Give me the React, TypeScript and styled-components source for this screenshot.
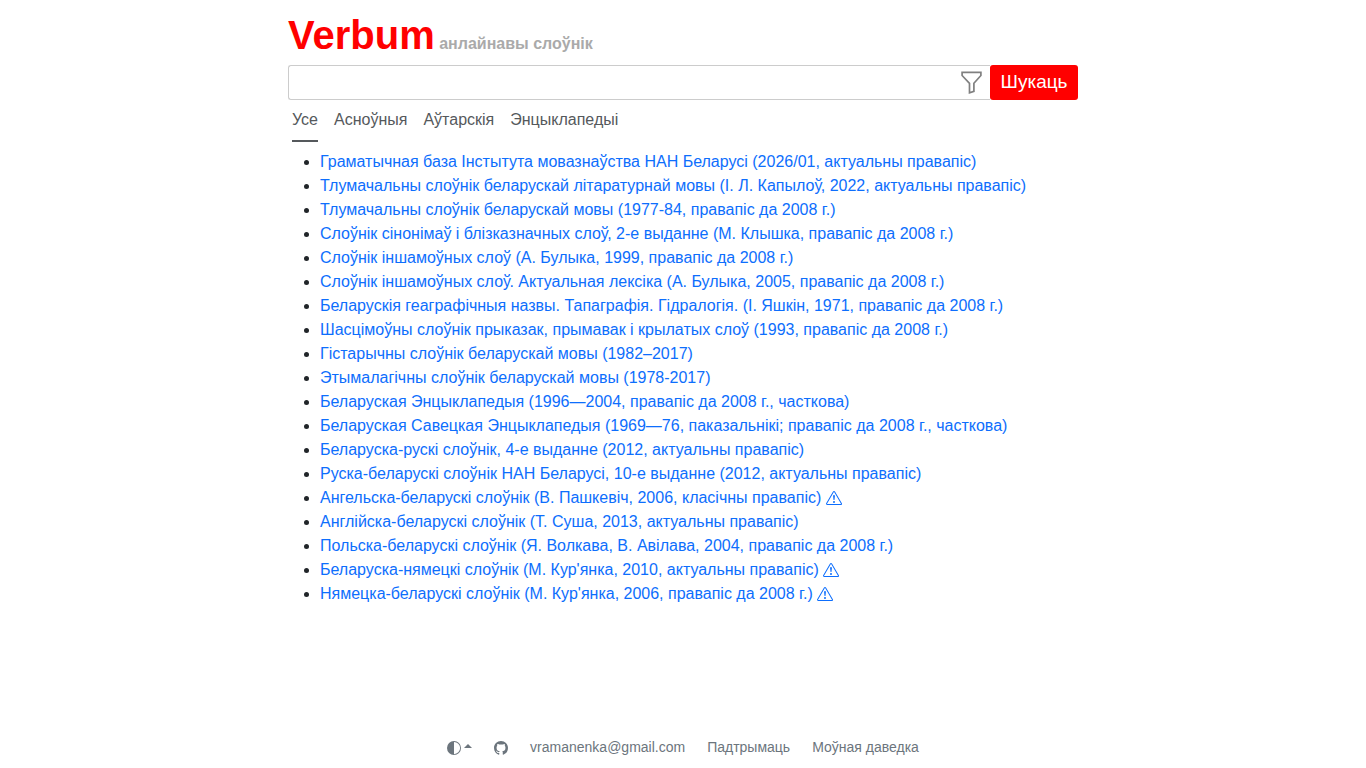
import React, { useState } from "react";
import styled, { createGlobalStyle } from "styled-components";
import { BsExclamationTriangle, BsGithub, BsCircleHalf } from "react-icons/bs";

const GlobalStyle = createGlobalStyle`
  *, *::before, *::after { box-sizing: border-box; }
  body {
    margin: 0;
    background: #fff;
    color: #212529;
    font: 400 16px/24px "Liberation Sans", Arial, sans-serif;
  }
`;

const Page = styled.div`
  display: flex;
  flex-direction: column;
  min-height: 100vh;
`;

const Main = styled.main`
  flex: 1;
  width: 100%;
  max-width: 790px;
  margin: 0 auto;
`;

const Brand = styled.h1`
  margin: 0;
  padding: 11px 0 6px;
  font-size: 16px;
  line-height: 24px;
`;

const BrandLink = styled.a`
  color: #aaa;
  text-decoration: none;
`;

const Name = styled.span`
  color: #f00;
  font-size: 40px;
  line-height: 48px;
`;

const SearchForm = styled.form`
  display: flex;
  height: 35px;
`;

const Field = styled.div`
  display: flex;
  flex: 1;
  border: 1px solid #ccc;
  border-right: 0;
  border-radius: 3px 0 0 3px;
`;

const Input = styled.input`
  flex: 1;
  min-width: 0;
  padding: 0 8px;
  border: 0;
  outline: 0;
  background: transparent;
  font: inherit;
`;

const FilterButton = styled.button`
  display: flex;
  align-items: center;
  padding: 0 6px;
  border: 0;
  background: transparent;
  color: #808080;
`;

const Submit = styled.button`
  min-width: 88px;
  padding: 0 10px 2px;
  border: 0;
  border-radius: 3px;
  background: #f00;
  color: #fff;
  font: 19px/30px "Liberation Sans", Arial, sans-serif;
`;

const Tabs = styled.nav`
  display: flex;
  gap: 16px;
  padding: 0 4px;
`;

const Tab = styled.button<{ $active: boolean }>`
  padding: 8px 0;
  border: 0;
  border-bottom: 2px solid ${(p) => (p.$active ? "#55595c" : "transparent")};
  background: none;
  color: #55595c;
  font: inherit;
`;

const List = styled.ul`
  margin: 8px 0 16px;
  padding-left: 32px;
`;

const DictLink = styled.a`
  color: #0d6efd;
  text-decoration: none;
`;

const Warning = styled(BsExclamationTriangle)`
  vertical-align: -3px;
`;

const Footer = styled.footer`
  display: flex;
  justify-content: center;
  align-items: center;
  gap: 22px;
  padding: 10px 0 9px;
  color: #6c757d;
  font-size: 14px;

  svg {
    margin-top: 2px;
  }
`;

const FooterLink = styled.a`
  display: flex;
  align-items: center;
  color: inherit;
  text-decoration: none;
`;

const ThemeButton = styled.button`
  display: flex;
  align-items: center;
  gap: 3px;
  padding: 0;
  border: 0;
  background: none;
  color: inherit;
  font-size: 14px;
`;

const Caret = styled.span`
  margin-bottom: 2px;
  border: 4px solid transparent;
  border-top: 0;
  border-bottom-color: currentColor;
`;

const FunnelIcon = () => (
  <svg width="25" height="25" viewBox="0 0 25 25" fill="none" stroke="currentColor" strokeWidth="1.7" aria-hidden="true">
    <path d="M3.1 2.4H21.9V5.5L14.9 13.3V21.3L10.5 22.8V13.3L3.1 5.5Z" />
  </svg>
);

const tabs = ["Усе", "Асноўныя", "Аўтарскія", "Энцыклапедыі"];

const dictionaries: { title: string; warn?: boolean }[] = [
  { title: "Граматычная база Інстытута мовазнаўства НАН Беларусі (2026/01, актуальны правапіс)" },
  { title: "Тлумачальны слоўнік беларускай літаратурнай мовы (І. Л. Капылоў, 2022, актуальны правапіс)" },
  { title: "Тлумачальны слоўнік беларускай мовы (1977-84, правапіс да 2008 г.)" },
  { title: "Слоўнік сінонімаў і блізказначных слоў, 2-е выданне (М. Клышка, правапіс да 2008 г.)" },
  { title: "Слоўнік іншамоўных слоў (А. Булыка, 1999, правапіс да 2008 г.)" },
  { title: "Слоўнік іншамоўных слоў. Актуальная лексіка (А. Булыка, 2005, правапіс да 2008 г.)" },
  { title: "Беларускія геаграфічныя назвы. Тапаграфія. Гідралогія. (І. Яшкін, 1971, правапіс да 2008 г.)" },
  { title: "Шасцімоўны слоўнік прыказак, прымавак і крылатых слоў (1993, правапіс да 2008 г.)" },
  { title: "Гістарычны слоўнік беларускай мовы (1982–2017)" },
  { title: "Этымалагічны слоўнік беларускай мовы (1978-2017)" },
  { title: "Беларуская Энцыклапедыя (1996—2004, правапіс да 2008 г., часткова)" },
  { title: "Беларуская Савецкая Энцыклапедыя (1969—76, паказальнікі; правапіс да 2008 г., часткова)" },
  { title: "Беларуска-рускі слоўнік, 4-е выданне (2012, актуальны правапіс)" },
  { title: "Руска-беларускі слоўнік НАН Беларусі, 10-е выданне (2012, актуальны правапіс)" },
  { title: "Ангельска-беларускі слоўнік (В. Пашкевіч, 2006, класічны правапіс)", warn: true },
  { title: "Англійска-беларускі слоўнік (Т. Суша, 2013, актуальны правапіс)" },
  { title: "Польска-беларускі слоўнік (Я. Волкава, В. Авілава, 2004, правапіс да 2008 г.)" },
  { title: "Беларуска-нямецкі слоўнік (М. Кур'янка, 2010, актуальны правапіс)", warn: true },
  { title: "Нямецка-беларускі слоўнік (М. Кур'янка, 2006, правапіс да 2008 г.)", warn: true },
];

export default function App() {
  const [active, setActive] = useState(0);
  return (
    <Page>
      <GlobalStyle />
      <Main>
        <Brand>
          <BrandLink href="#"><Name>Verbum</Name> анлайнавы слоўнік</BrandLink>
        </Brand>
        <SearchForm onSubmit={(e) => e.preventDefault()}>
          <Field>
            <Input type="text" aria-label="Пошук" />
            <FilterButton type="button" aria-label="Фільтр"><FunnelIcon /></FilterButton>
          </Field>
          <Submit type="submit">Шукаць</Submit>
        </SearchForm>
        <Tabs>
          {tabs.map((t, i) => (
            <Tab key={t} type="button" $active={i === active} onClick={() => setActive(i)}>{t}</Tab>
          ))}
        </Tabs>
        <List>
          {dictionaries.map((d) => (
            <li key={d.title}>
              <DictLink href="#">{d.title}{d.warn && <> <Warning /></>}</DictLink>
            </li>
          ))}
        </List>
      </Main>
      <Footer>
        <ThemeButton type="button" aria-label="Тэма"><BsCircleHalf /><Caret /></ThemeButton>
        <FooterLink href="#" aria-label="GitHub"><BsGithub /></FooterLink>
        <FooterLink href="#">vramanenka@gmail.com</FooterLink>
        <FooterLink href="#">Падтрымаць</FooterLink>
        <FooterLink href="#">Моўная даведка</FooterLink>
      </Footer>
    </Page>
  );
}
